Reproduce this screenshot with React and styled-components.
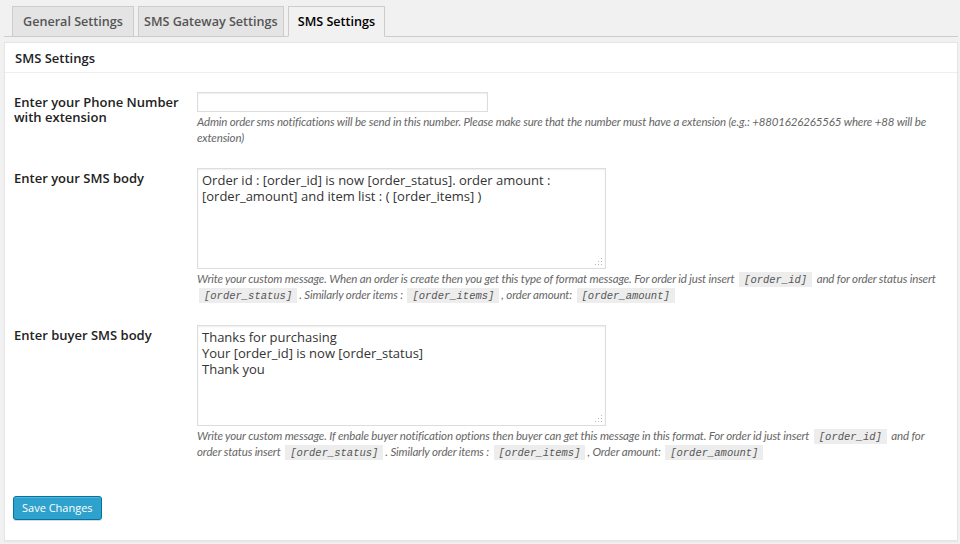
import styled, { createGlobalStyle } from 'styled-components'

const GlobalStyle = createGlobalStyle`
	html, body {
		margin: 0;
		padding: 0;
		background: #f1f1f1;
		font-family: "Open Sans", "Noto Sans", sans-serif;
		color: #222;
	}
`

const Wrap = styled.div`
	padding: 6px 2px 4px 4px;
`

const TabBar = styled.div`
	display: flex;
	gap: 4px;
	padding-left: 8px;
	border-bottom: 1px solid #ccc;
	height: 30px;
	margin-bottom: 5px;
`

const Tab = styled.a`
	display: block;
	box-sizing: border-box;
	height: ${p => (p.$active ? '31px' : '30px')};
	padding: 0 ${p => p.$pad || 9}px;
	font-size: 12.6px;
	font-weight: 600;
	line-height: 29px;
	color: ${p => (p.$active ? '#000' : '#555')};
	background: ${p => (p.$active ? '#f1f1f1' : '#e4e4e4')};
	border: 1px solid #ccc;
	border-bottom: ${p => (p.$active ? '1px solid #f1f1f1' : 'none')};
	text-decoration: none;
	cursor: pointer;
`

const Panel = styled.div`
	background: #fff;
	border: 1px solid #e5e5e5;
	box-shadow: 0 1px 1px rgba(0, 0, 0, 0.04);
`

const PanelTitle = styled.h3`
	margin: 0;
	height: 30px;
	box-sizing: border-box;
	padding: 0 10px;
	font-size: 13px;
	font-weight: 600;
	line-height: 30px;
	border-bottom: 1px solid #eee;
`

const PanelBody = styled.div`
	padding: 19px 10px 20px 9px;
`

const Row = styled.div`
	display: grid;
	grid-template-columns: 183px 1fr;
	margin-bottom: ${p => p.$gap || 22}px;
`

const Label = styled.label`
	padding-top: 3px;
	font-size: 13px;
	font-weight: 600;
	line-height: 15px;
	color: #222;
`

const Field = styled.div`
	min-width: 0;
`

const TextInput = styled.input`
	display: block;
	box-sizing: border-box;
	width: 291px;
	height: 20px;
	margin: 0;
	padding: 2px 4px;
	border: 1px solid #ddd;
	box-shadow: inset 0 1px 2px rgba(0, 0, 0, 0.07);
	font: 13px "Open Sans", sans-serif;
	outline: none;
`

const TextArea = styled.textarea`
	display: block;
	box-sizing: border-box;
	width: 409px;
	height: 101px;
	margin: 0;
	padding: 3px 4px;
	border: 1px solid #ddd;
	box-shadow: inset 0 1px 2px rgba(0, 0, 0, 0.07);
	font: 13px/16px "Open Sans", sans-serif;
	color: #333;
	outline: none;
	resize: none;
	background:
		radial-gradient(circle, #bbb 0.7px, transparent 0.9px) right 2px bottom 2px / 3px 3px no-repeat,
		radial-gradient(circle, #bbb 0.7px, transparent 0.9px) right 5px bottom 2px / 3px 3px no-repeat,
		radial-gradient(circle, #bbb 0.7px, transparent 0.9px) right 2px bottom 5px / 3px 3px no-repeat,
		radial-gradient(circle, #bbb 0.7px, transparent 0.9px) right 8px bottom 2px / 3px 3px no-repeat,
		radial-gradient(circle, #bbb 0.7px, transparent 0.9px) right 5px bottom 5px / 3px 3px no-repeat,
		radial-gradient(circle, #bbb 0.7px, transparent 0.9px) right 2px bottom 8px / 3px 3px no-repeat,
		#fff;
`

const Description = styled.p`
	margin: 2px 0 0;
	font-family: Lato, "Open Sans", sans-serif;
	font-style: italic;
	font-size: 11.5px;
	letter-spacing: -0.15px;
	line-height: 16px;
	color: #666;
`

const Code = styled.code`
	padding: 2px 5px 1px;
	margin: 0 2px;
	background: rgba(0, 0, 0, 0.07);
	font-family: "Liberation Mono", monospace;
	font-size: 10.5px;
	line-height: 1;
	letter-spacing: 0;
	color: #555;
`

const Button = styled.button`
	height: 24px;
	padding: 0 8px 1px;
	font: 11px "Open Sans", sans-serif;
	color: #fff;
	background: #2ea2cc;
	border: 1px solid #0074a2;
	border-radius: 3px;
	box-shadow: inset 0 1px 0 rgba(120, 200, 230, 0.5), 0 1px 0 rgba(0, 0, 0, 0.15);
	cursor: pointer;
	margin-left: -1px;
`

export default function App() {
	return (
		<Wrap>
			<GlobalStyle />
			<TabBar>
				<Tab $pad={10}>General Settings</Tab>
				<Tab $pad={5}>SMS Gateway Settings</Tab>
				<Tab $active>SMS Settings</Tab>
			</TabBar>
			<Panel>
				<PanelTitle>SMS Settings</PanelTitle>
				<PanelBody>
					<Row>
						<Label>Enter your Phone Number with extension</Label>
						<Field>
							<TextInput type="text" />
							<Description>
								Admin order sms notifications will be send in this number. Please make sure that the number must have a extension (e.g.: +8801626265565 where +88 will be extension)
							</Description>
						</Field>
					</Row>
					<Row>
						<Label>Enter your SMS body</Label>
						<Field>
							<TextArea defaultValue="Order id : [order_id] is now [order_status]. order amount : [order_amount] and item list : ( [order_items] )" />
							<Description>
								Write your custom message. When an order is create then you get this type of format message. For order id just insert <Code>[order_id]</Code> and for order status insert <Code>[order_status]</Code>. Similarly order items : <Code>[order_items]</Code>, order amount: <Code>[order_amount]</Code>
							</Description>
						</Field>
					</Row>
					<Row $gap={35}>
						<Label>Enter buyer SMS body</Label>
						<Field>
							<TextArea defaultValue={'Thanks for purchasing\nYour [order_id] is now [order_status]\nThank you'} />
							<Description>
								Write your custom message. If enbale buyer notification options then buyer can get this message in this format. For order id just insert <Code>[order_id]</Code> and for order status insert <Code>[order_status]</Code>. Similarly order items : <Code>[order_items]</Code>, Order amount: <Code>[order_amount]</Code>
							</Description>
						</Field>
					</Row>
					<Button>Save Changes</Button>
				</PanelBody>
			</Panel>
		</Wrap>
	)
}
